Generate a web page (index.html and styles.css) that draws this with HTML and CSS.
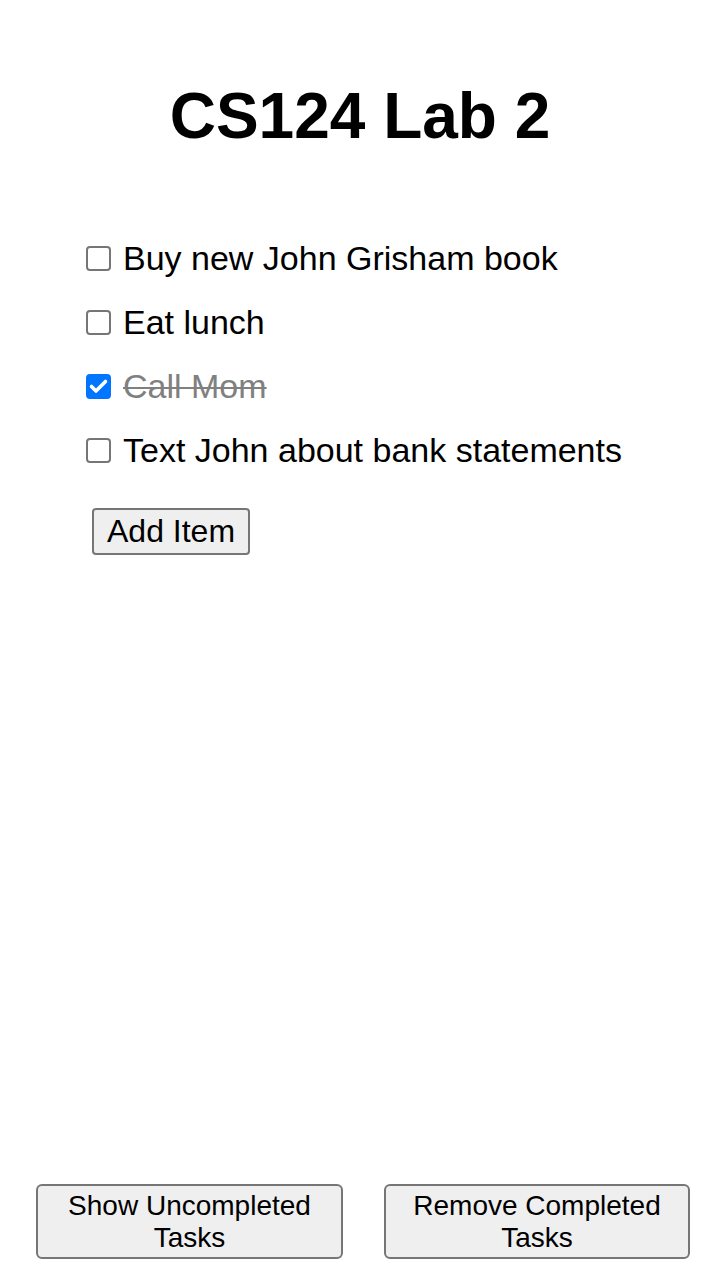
FILE: index.html
```html
<!DOCTYPE html>
<html lang="en">
<head>
<meta charset="utf-8">
<title>CS124 Lab 2</title>
<link rel="stylesheet" href="styles.css">
</head>
<body>
<div class="page">
  <h1 class="title">CS124 Lab 2</h1>
  <ul class="tasks">
    <li class="task"><span class="box"></span><span class="label">Buy new John Grisham book</span></li>
    <li class="task"><span class="box"></span><span class="label">Eat lunch</span></li>
    <li class="task done"><span class="box checked"><svg viewBox="0 0 25 25" width="25" height="25"><path d="M5.5 12.5 L10 17 L19.5 7.5" fill="none" stroke="#fff" stroke-width="3.6" stroke-linecap="round" stroke-linejoin="round"/></svg></span><span class="label">Call Mom</span></li>
    <li class="task"><span class="box"></span><span class="label">Text John about bank statements</span></li>
  </ul>
  <div class="add-row"><button class="btn add">Add Item</button></div>
  <div class="footer">
    <button class="btn big">Show Uncompleted<br>Tasks</button>
    <button class="btn big">Remove Completed<br>Tasks</button>
  </div>
</div>
</body>
</html>
```
FILE: styles.css
```css
html, body {
  margin: 0;
  padding: 0;
  background: #fff;
}
body {
  font-family: "Liberation Sans", Arial, Helvetica, sans-serif;
  color: #000;
}
.page {
  height: 1280px;
  display: flex;
  flex-direction: column;
}
.title {
  margin: 79px 0 0;
  font-size: 64px;
  line-height: 74px;
  font-weight: bold;
  text-align: center;
}
.tasks {
  list-style: none;
  margin: 73px 0 0;
  padding: 0 0 0 86px;
}
.task {
  height: 64px;
  display: flex;
  align-items: center;
  gap: 12px;
  font-size: 34px;
}
.box {
  width: 25px;
  height: 25px;
  box-sizing: border-box;
  border: 2px solid #767676;
  border-radius: 4px;
  background: #fff;
  flex: none;
  display: flex;
  align-items: center;
  justify-content: center;
}
.box.checked {
  background: #0075ff;
  border-color: #0075ff;
}
.box svg {
  display: block;
  flex: none;
}
.task.done .label {
  color: #808080;
  text-decoration: line-through;
  text-decoration-thickness: 2px;
}
.add-row {
  padding-left: 92px;
  margin-top: 26px;
}
.btn {
  font-family: "Liberation Sans", Arial, Helvetica, sans-serif;
  background: #efefef;
  border: 2px solid #767676;
  color: #000;
  margin: 0;
}
.add {
  height: 47px;
  padding: 0 13px;
  font-size: 32px;
  line-height: 43px;
  border-radius: 4px;
}
.footer {
  margin-top: auto;
  display: grid;
  grid-template-columns: 307px 306px;
  column-gap: 41px;
  padding: 0 0 21px 36px;
}
.big {
  height: 75px;
  padding: 0;
  font-size: 28px;
  line-height: 32px;
  border-radius: 6px;
  text-align: center;
}
```
